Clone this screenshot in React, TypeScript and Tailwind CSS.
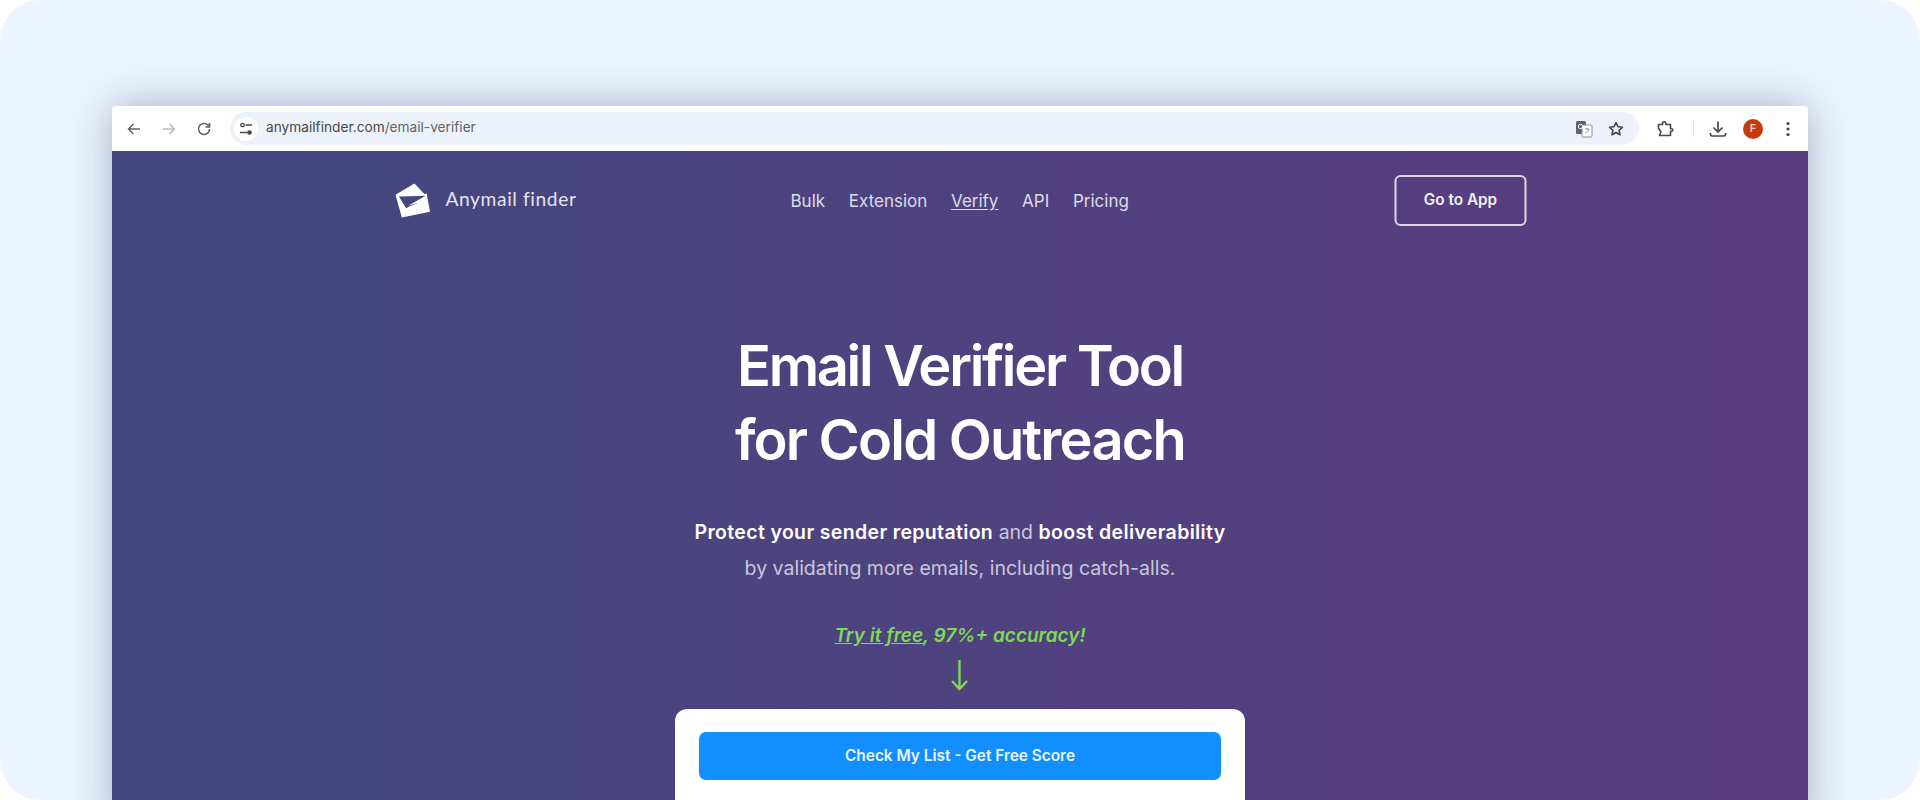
export default function App() {
  return (
    <div className="h-[800px] w-[1920px] bg-white overflow-hidden font-['Inter',sans-serif]">
      <div className="h-[800px] overflow-hidden rounded-[40px] bg-[#ebf4ff] px-[112px] pt-[106px]">
        <div className="h-[724px] rounded-t-[3px] bg-white shadow-[0_0_40px_rgba(40,60,80,0.35)]">
          <div className="flex h-[45px] items-center text-[#474747]">
            <div className="flex w-[118px] items-center pl-[12px]">
              <svg width="20" height="20" viewBox="0 0 20 20" fill="none" stroke="#5f6368" strokeWidth="1.5"><path d="M16 10H4.500M9.500 5l-5 5 5 5" /></svg>
              <svg className="ml-[15px]" width="20" height="20" viewBox="0 0 20 20" fill="none" stroke="#b8babd" strokeWidth="1.5"><path d="M4 10h11.500M10.500 5l5 5-5 5" /></svg>
              <svg className="ml-[15px]" width="20" height="20" viewBox="0 0 20 20" fill="none" stroke="#5f6368" strokeWidth="1.6"><path d="M15.500 10a5.500 5.500 0 1 1-1.600-3.900L15.500 8M15.500 4v4h-4" /></svg>
            </div>
            <div className="flex h-[33px] w-[1409px] items-center justify-between rounded-full bg-[#edf2fa] pl-[4px] pr-[14px]">
              <div className="flex items-center">
                <div className="flex h-[24px] w-[24px] items-center justify-center rounded-full bg-white">
                  <svg width="16" height="16" viewBox="0 0 16 16" fill="none" stroke="#474747" strokeWidth="1.3"><circle cx="4.500" cy="4" r="1.700" /><path d="M7.500 4H14M2 11.500h7" /><circle cx="11.500" cy="11.500" r="1.700" fill="#474747" /></svg>
                </div>
                <span className="ml-[8px] pb-[1px] text-[13.700px] leading-none text-[#474747]">anymailfinder.com<span className="text-[#5f6368]">/email-verifier</span></span>
              </div>
              <div className="flex items-center gap-[14px]">
                <svg width="18" height="18" viewBox="0 0 18 18"><rect x="1" y="1" width="10" height="13" rx="1.500" fill="#5f6368" /><rect x="7" y="5" width="10" height="12" rx="1.500" fill="#fff" stroke="#8a8d91" /><path d="M10 9h4M12 8v1M10.500 13c2-1 3-2.500 3.500-4" stroke="#8a8d91" fill="none" /><circle cx="5.500" cy="6.500" r="2.200" fill="none" stroke="#fff" /></svg>
                <svg width="18" height="18" viewBox="0 0 18 18" fill="none" stroke="#474747" strokeWidth="1.6" strokeLinejoin="round"><path d="M9 2.500l1.900 4.200 4.600.5-3.400 3.100.9 4.500L9 12.500l-4 2.300.9-4.500L2.500 7.200l4.600-.5z" /></svg>
              </div>
            </div>
            <div className="flex flex-1 items-center pl-[16px]">
              <svg width="20" height="20" viewBox="0 0 20 20" fill="none" stroke="#474747" strokeWidth="1.6" strokeLinejoin="round"><path d="M3.500 5.500H7.500V4.500a1.700 1.700 0 0 1 3.400 0V5.500h4.600v4.200h1a1.300 1.300 0 0 1 0 2.600h-1v4.200H4.500l1.500-3.800-2.500-3.200z" /></svg>
              <div className="ml-[18px] h-[16px] w-[1px] bg-[#d3e3fd]" />
              <svg className="ml-[14px]" width="20" height="20" viewBox="0 0 20 20" fill="none" stroke="#474747" strokeWidth="1.7"><path d="M10 2.500v10M5.500 8.500l4.500 4.500 4.500-4.500" /><path d="M2.500 14v1.500a1.500 1.500 0 0 0 1.500 1.500h12a1.500 1.500 0 0 0 1.500-1.500V14" /></svg>
              <div className="ml-[15px] flex h-[20px] w-[20px] items-center justify-center rounded-full bg-[#c8390f] text-[11px] font-semibold text-[#f6d5c8]">F</div>
              <svg className="ml-[15px]" width="20" height="20" viewBox="0 0 20 20" fill="#474747"><circle cx="10" cy="4.500" r="1.600" /><circle cx="10" cy="10" r="1.600" /><circle cx="10" cy="15.500" r="1.600" /></svg>
            </div>
          </div>
          <div className="h-[649px] bg-gradient-to-r from-[#42487f] to-[#5a3c7e] pt-[24px]">
            <div className="relative mx-auto flex h-[51px] w-[1132px] translate-x-[0.500px] items-center justify-between">
              <div className="flex items-center pl-[1px]">
                <svg width="35" height="35" viewBox="0 0 36 36" fill="#fff" fillRule="evenodd"><path d="M0 12L19.500 0.500 30 11.500 32 10.500 35.500 29.500 6.500 35.500zM3.500 14L31 13 13 23.500 24.500 20 13.500 24.500 11 26z" /></svg>
                <span className="ml-[15px] -translate-y-[1px] font-['Lato',sans-serif] text-[19.200px] tracking-[0.6px] text-[#e6e4ef]">Anymail finder</span>
              </div>
              <nav className="absolute left-[396px] top-[14px] flex gap-[23.700px] text-[17px] leading-[24px] text-[#dcdbe9]">
                <span>Bulk</span>
                <span>Extension</span>
                <span className="underline underline-offset-2">Verify</span>
                <span>API</span>
                <span>Pricing</span>
              </nav>
              <div className="flex h-[51px] w-[132px] items-center justify-center rounded-[6px] border-2 border-[#dcdae8] text-[15.300px] font-semibold text-[#f2f1f6]">Go to App</div>
            </div>
            <h1 className="mt-[104px] text-center text-[56px] font-semibold leading-[73.500px] text-white">
              <span className="tracking-[-2.300px]">Email Verifier Tool</span>
              <br />
              <span className="tracking-[-1.800px]">for Cold Outreach</span>
            </h1>
            <p className="mt-[38px] text-center text-[19.500px] leading-[35.500px] text-[#c9c6dc]">
              <span className="font-semibold tracking-[0.350px] text-white">Protect your sender reputation</span> and <span className="font-semibold tracking-[0.350px] text-white">boost deliverability</span>
              <br />
              by validating more emails, including catch-alls.
            </p>
            <p className="mt-[36px] text-center text-[19px] font-semibold italic leading-[28px] text-[#7ed957]"><span className="underline">Try it free</span>, 97%+ accuracy!</p>
            <div className="mt-[9px] flex justify-center">
              <svg width="20" height="32" viewBox="0 0 20 32" fill="none" stroke="#7ed957" strokeWidth="2.400"><path d="M9.500 1v29M2 22l7.500 8 7.500-8" /></svg>
            </div>
            <div className="mx-auto mt-[18px] h-[200px] w-[570px] rounded-[12px] bg-white px-[24px] pt-[23px]">
              <div className="flex h-[48px] items-center justify-center rounded-[7px] bg-[#118ffe] text-[15.400px] font-semibold text-[#eaf4ff]">Check My List - Get Free Score</div>
            </div>
          </div>
        </div>
      </div>
    </div>
  );
}
